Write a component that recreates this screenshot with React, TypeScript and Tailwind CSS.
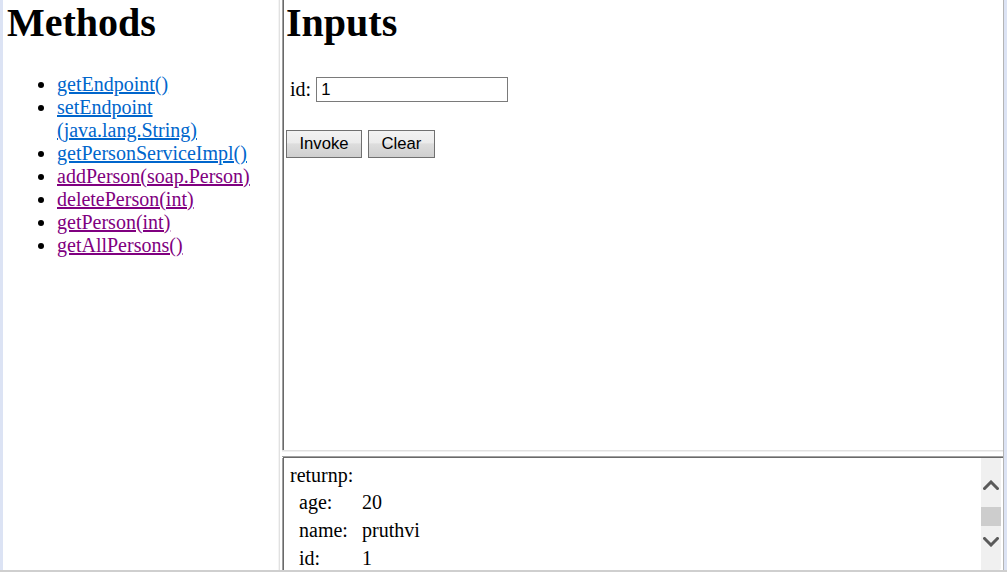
import React from "react";

const Chevron = ({ up }: { up: boolean }) => (
  <svg width="16" height="10" viewBox="0 0 16 10" className="block">
    <path
      d={up ? "M1.5 8.5 L8 2 L14.5 8.5" : "M1.5 1.5 L8 8 L14.5 1.5"}
      fill="none"
      stroke="#5a5a5a"
      strokeWidth="3"
      strokeLinecap="square"
      strokeLinejoin="miter"
    />
  </svg>
);

export default function App() {
  const links: { label: React.ReactNode; visited: boolean }[] = [
    { label: "getEndpoint()", visited: false },
    {
      label: (
        <>
          setEndpoint
          <br />
          (java.lang.String)
        </>
      ),
      visited: false,
    },
    { label: "getPersonServiceImpl()", visited: false },
    { label: "addPerson(soap.Person)", visited: true },
    { label: "deletePerson(int)", visited: true },
    { label: "getPerson(int)", visited: true },
    { label: "getAllPersons()", visited: true },
  ];

  const rows = [
    ["age:", "20"],
    ["name:", "pruthvi"],
    ["id:", "1"],
  ];

  return (
    <div className="w-[1007px] h-[572px] flex flex-col bg-white overflow-hidden font-['Liberation_Serif','Times_New_Roman',serif] text-black">
      <div className="flex flex-1 min-h-0">
        {/* left window edge */}
        <div className="w-[3px] bg-[#dce3f4]" />

        {/* left frame: Methods */}
        <div className="w-[275px] pl-[4px] overflow-hidden">
          <h1 className="m-0 text-[40px] leading-[46px] font-bold">Methods</h1>
          <ul className="mt-[27px] pl-[50px] list-disc text-[20px] leading-[23px]">
            {links.map((l, i) => (
              <li key={i}>
                <a
                  href="#"
                  className={
                    "underline " +
                    (l.visited ? "text-[#800080]" : "text-[#0066cc]")
                  }
                >
                  {l.label}
                </a>
              </li>
            ))}
          </ul>
        </div>

        {/* frame divider */}
        <div className="w-[4px] flex">
          <div className="w-[1px] bg-[#f4f4f4]" />
          <div className="w-[1px] bg-[#e1e1e1]" />
          <div className="w-[2px] bg-white" />
        </div>

        {/* right column */}
        <div className="w-[721px] flex flex-col">
          {/* top frame: Inputs */}
          <div className="h-[450px] flex">
            <div className="w-[1px] bg-[#a0a0a0]" />
            <div className="w-[1px] bg-[#696969]" />
            <div className="flex-1 pl-[2px] flex flex-col items-start">
              <h1 className="m-0 text-[40px] leading-[46px] font-bold">Inputs</h1>
              <div className="mt-[31px] flex items-center h-[25px]">
                <span className="ml-[4px] text-[20px] leading-[23px]">id:</span>
                <input
                  defaultValue="1"
                  className="ml-[5px] w-[192px] h-[25px] border border-[#7a7a7a] bg-white px-[4px] outline-none font-['Liberation_Sans',Arial,sans-serif] text-[16.67px] text-black"
                />
              </div>
              <div className="mt-[28px] flex gap-[6px]">
                <button className="w-[76px] h-[28px] border border-[#707070] bg-[linear-gradient(#f2f2f2,#ebebeb_45%,#dddddd_50%,#cfcfcf)] font-['Liberation_Sans',Arial,sans-serif] text-[16.67px] leading-none text-black">
                  Invoke
                </button>
                <button className="w-[67px] h-[28px] border border-[#707070] bg-[linear-gradient(#f2f2f2,#ebebeb_45%,#dddddd_50%,#cfcfcf)] font-['Liberation_Sans',Arial,sans-serif] text-[16.67px] leading-none text-black">
                  Clear
                </button>
              </div>
            </div>
          </div>
          <div className="h-[1px] bg-[#e1e1e1]" />
          <div className="h-[1px] bg-[#f0f0f0]" />
          <div className="h-[4px] bg-white" />
          {/* bottom frame: result */}
          <div className="h-[1px] bg-[#a0a0a0]" />
          <div className="h-[1px] bg-[#696969] ml-[1px]" />
          <div className="flex-1 min-h-0 flex">
            <div className="w-[1px] bg-[#a0a0a0]" />
            <div className="w-[1px] bg-[#696969]" />
            <div className="flex-1 overflow-hidden pl-[6px] pt-[6px] text-[20px] leading-[23px]">
              <div className="h-[24px]">returnp:</div>
              {rows.map(([k, v]) => (
                <div key={k} className="flex h-[28px] items-center pl-[9px]">
                  <span className="w-[63px]">{k}</span>
                  <span>{v}</span>
                </div>
              ))}
            </div>
            {/* scrollbar */}
            <div className="w-[20px] bg-[#f0f0f0] flex flex-col items-center rounded-br-[2px]">
              <div className="mt-[22px]">
                <Chevron up={true} />
              </div>
              <div className="mt-[17px] h-[19px] w-full bg-[#cdcdcd]" />
              <div className="mt-[11px]">
                <Chevron up={false} />
              </div>
            </div>
            <div className="w-[2px] bg-white" />
          </div>
        </div>

        {/* right window edge */}
        <div className="w-[1px] bg-[#b4b4b4]" />
        <div className="w-[3px] bg-[#dce3f4]" />
      </div>
      <div className="h-[2px] bg-[#cfcfcf]" />
    </div>
  );
}
